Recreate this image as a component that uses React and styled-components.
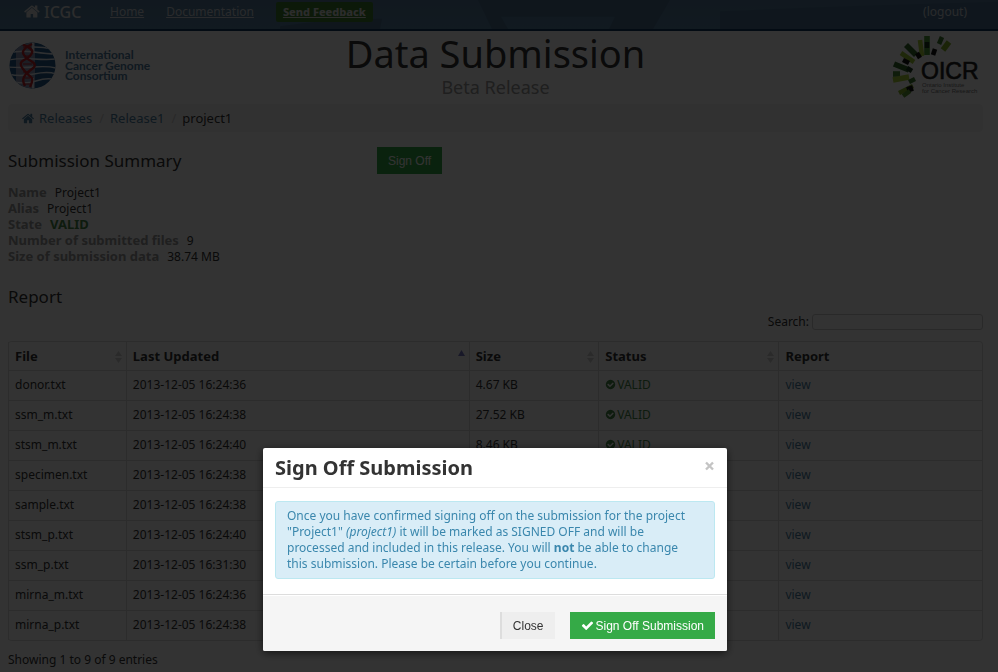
import React from "react";
import styled, { createGlobalStyle } from "styled-components";

const Global = createGlobalStyle`
  * { box-sizing: border-box; }
  body {
    margin: 0;
    background: #fff;
    color: #333;
    font: 12px/16px "Noto Sans", "Open Sans", sans-serif;
    overflow: hidden;
  }
`;

const Navbar = styled.nav`
  position: relative;
  display: flex;
  align-items: center;
  height: 31px;
  padding: 0 31px 6px 24px;
  background: linear-gradient(#567a9a, #5580a0);
  border-bottom: 2px solid #123b5e;
  overflow: hidden;
`;
const NavArt = styled.svg`
  position: absolute;
  inset: 0;
  width: 100%;
  height: 100%;
`;
const NavItems = styled.div`
  position: relative;
  display: flex;
  align-items: center;
  flex: 1;
`;
const Brand = styled.a`
  display: flex;
  align-items: center;
  gap: 3px;
  width: 86px;
  color: #ddd;
  font-size: 16px;
  font-weight: 500;
  text-decoration: none;
`;
const NavLink = styled.a`
  color: #ccd3da;
  font-size: 12px;
  margin-right: 22px;
  text-decoration: ${(p) => (p.$plain ? "none" : "underline")};
  &:last-child { margin: 0 0 0 auto; }
`;
const Feedback = styled.a`
  padding: 2px 7px;
  border-radius: 2px;
  background: #3f7f2f;
  color: #ddd;
  font-size: 11px;
  font-weight: 800;
`;
const Icon = styled.svg`
  width: ${(p) => p.$size}px;
  height: ${(p) => p.$size}px;
  fill: currentColor;
  flex: none;
`;

const Page = styled.div`
  padding: 0 15px 0 8px;
`;
const Masthead = styled.header`
  display: grid;
  grid-template-columns: 1fr auto 1fr;
  height: 73px;
  align-items: start;
`;
const TitleBlock = styled.div`
  text-align: center;
`;
const Title = styled.h1`
  margin: 0;
  font-size: 38px;
  line-height: 44px;
  font-weight: 400;
`;
const Subtitle = styled.p`
  margin: 0;
  color: #999;
  font-size: 18px;
  line-height: 24px;
`;
const OicrWrap = styled.a`
  justify-self: end;
`;

const Breadcrumb = styled.ol`
  display: flex;
  align-items: center;
  gap: 6px;
  height: 28px;
  margin: 0;
  padding: 0 14px;
  list-style: none;
  background: #f5f5f5;
  border-radius: 4px;
`;
const Crumb = styled.li`
  display: flex;
  align-items: center;
  font-size: 13px;
  &:not(:last-child)::after {
    content: "/";
    margin-left: 7px;
    color: #ccc;
  }
`;
const Link = styled.a`
  color: #4b7d9f;
  text-decoration: none;
`;
const CrumbLink = styled(Link)`
  display: inline-flex;
  align-items: center;
  gap: 4px;
`;

const SummaryRow = styled.section`
  display: grid;
  grid-template-columns: 369px 1fr;
  align-items: start;
  padding-top: 15px;
`;
const Heading = styled.h2`
  margin: 0;
  font-size: 17px;
  line-height: 28px;
  font-weight: 400;
`;
const Button = styled.button`
  height: 27px;
  padding: 0 11px;
  border: 0;
  background: ${(p) => (p.$primary ? "#35aa47" : "#eee")};
  color: ${(p) => (p.$primary ? "#fff" : "#333")};
  font: 12px/20px "Liberation Sans", sans-serif;
  ${(p) => (p.$primary ? "" : "border-left: 2px solid #ddd;")}
  display: inline-flex;
  align-items: center;
  gap: 2px;
`;
const SignOffCell = styled.div`
  display: flex;
`;
const Facts = styled.dl`
  margin: 10px 0 18px;
`;
const Fact = styled.div`
  display: flex;
  gap: 8px;
`;
const Term = styled.dt`
  color: #999;
  font-size: 13px;
  line-height: 14px;
  font-weight: 700;
`;
const Value = styled.dd`
  margin: 0;
  ${(p) => (p.$valid ? "color: #468847; font-size: 13px; line-height: 14px; font-weight: 700;" : "")}
  min-height: 16px;
`;

const SearchBar = styled.label`
  display: flex;
  justify-content: flex-end;
  align-items: center;
  gap: 3px;
  height: 16px;
  margin: 3px 0 11px;
`;
const SearchInput = styled.input`
  width: 171px;
  height: 16px;
  border: 1px solid #ccc;
  border-radius: 3px;
  background: #fff;
`;

const Table = styled.table`
  width: 100%;
  table-layout: fixed;
  border: 1px solid #ddd;
  border-left: 0;
  border-radius: 4px;
  border-collapse: separate;
  border-spacing: 0;
`;
const Th = styled.th`
  width: ${(p) => p.$width};
  height: 28px;
  padding: 0 6px;
  border-left: 1px solid #ddd;
  font-size: 13px;
  text-align: left;
`;
const ThInner = styled.div`
  display: flex;
  align-items: center;
  justify-content: space-between;
`;
const Td = styled.td`
  height: 30px;
  padding: 0 6px 2px;
  border-left: 1px solid #ddd;
  border-top: 1px solid #ddd;
`;
const Status = styled.span`
  display: flex;
  align-items: center;
  gap: 1px;
  color: #468847;
`;
const SortIcon = styled.svg`
  width: 7px;
  height: 13px;
  margin-right: -2px;
`;
const Info = styled.p`
  margin: 11px 0 0;
`;

const Backdrop = styled.div`
  position: fixed;
  inset: 0;
  display: flex;
  justify-content: center;
  align-items: flex-start;
  padding: 448px 8px 0 0;
  background: rgba(0, 0, 0, 0.8);
`;
const Dialog = styled.section`
  width: 464px;
  background: #fff;
  border-radius: 2px;
  box-shadow: 0 2px 8px rgba(0, 0, 0, 0.6);
  overflow: hidden;
`;
const DialogHeader = styled.header`
  display: flex;
  justify-content: space-between;
  align-items: center;
  height: 40px;
  padding: 0 12px;
  border-bottom: 1px solid #eee;
`;
const DialogTitle = styled.h3`
  margin: 0;
  font-size: 20px;
  line-height: 24px;
  font-weight: 700;
`;
const CloseButton = styled.button`
  display: flex;
  padding: 0;
  margin-bottom: 4px;
  border: 0;
  background: none;
  color: #c4c4c4;
`;
const DialogBody = styled.div`
  padding: 13px 12px 15px;
`;
const Alert = styled.p`
  margin: 0;
  padding: 6px 24px 6px 11px;
  border: 1px solid #bce8f1;
  border-radius: 3px;
  background: #d9edf7;
  color: #3a87ad;
`;
const DialogFooter = styled.footer`
  display: flex;
  justify-content: flex-end;
  gap: 15px;
  padding: 17px 12px 12px;
  border-top: 1px solid #ddd;
  background: #f5f5f5;
  box-shadow: inset 0 1px 0 #fff;
`;

const HOME =
  "M1408 992v480q0 26-19 45t-45 19h-384v-384h-256v384h-384q-26 0-45-19t-19-45v-480q0-1 .5-3t.5-3l575-474 575 474q1 2 1 6zm223-69l-62 74q-8 9-21 11h-3q-13 0-21-7l-692-577-692 577q-12 8-24 7-13-2-21-11l-62-74q-8-10-7-23.5t11-21.5l719-599q32-26 76-26t76 26l244 204v-195q0-14 9-23t23-9h192q14 0 23 9t9 23v408l219 182q10 8 11 21.5t-7 23.5z";
const CHECK =
  "M1671 566q0 40-28 68l-724 724-136 136q-28 28-68 28t-68-28l-136-136-362-362q-28-28-28-68t28-68l136-136q28-28 68-28t68 28l294 295 656-657q28-28 68-28t68 28l136 136q28 28 28 68z";
const CHECK_CIRCLE =
  "M1412 734q0-28-18-46l-91-90q-19-19-45-19t-45 19l-408 407-226-226q-19-19-45-19t-45 19l-91 90q-18 18-18 46 0 27 18 45l362 362q19 19 45 19 27 0 46-19l543-543q18-18 18-45zm252 162q0 209-103 385.5t-279.5 279.5-385.5 103-385.5-103-279.5-279.5-103-385.5 103-385.5 279.5-279.5 385.5-103 385.5 103 279.5 279.5 103 385.5z";

const Glyph = ({ d, size }) => (
  <Icon $size={size} viewBox="0 0 1792 1792" aria-hidden="true">
    <path d={d} />
  </Icon>
);

const IcgcLogo = () => (
  <svg width="150" height="58" viewBox="0 0 150 58" role="img" aria-label="International Cancer Genome Consortium">
    <defs>
      <clipPath id="globe">
        <circle cx="24.5" cy="34.5" r="23" />
      </clipPath>
    </defs>
    <g clipPath="url(#globe)">
      <rect x="1" y="11" width="47" height="47" fill="#235a8c" />
      <rect x="8" y="11" width="19" height="47" fill="#8c96b4" />
      <g fill="none" stroke="#e8eef5" strokeWidth="1.4">
        <path d="M0 22q12-3 26-1t22 2M0 29q12-2 26-1t22 0M0 36q12 1 26 0t22 1M0 43q12 3 26 0t22 0M2 50q14 4 26 0t20-1M26 16q10 0 18 2" />
      </g>
      <path d="M25 9v13M25 47v12" stroke="#fff" strokeWidth="1.6" />
      <g fill="none" stroke="#c02329" strokeWidth="2.4">
        <path d="M14 13q12 5 10 9t-8 7-1 9 8 8-1 10" />
        <path d="M24 13q-10 5-9 9t8 8 1 8-8 8 1 9" />
      </g>
      <path d="M15 16h8M17 25h6M15 33h9M15 41h7M17 47h5M16 53h6" stroke="#c02329" strokeWidth="1" />
    </g>
    <g fill="#4f7c9f" fontFamily="Lato, sans-serif" fontSize="12" fontWeight="700">
      <text x="57" y="28">International</text>
      <text x="57" y="39">Cancer Genome</text>
      <text x="57" y="49">Consortium</text>
    </g>
  </svg>
);

const BURST = [
  [54, 19, 60, 11, 5, "#86b52b"], [50, 13, 53, 6, 4, "#3f7a30"],
  [44, 24, 46, 18, 4, "#111"], [38, 24, 38, 5, 5, "#4e9a3a"],
  [38, 17, 38, 11, 4, "#18351c"], [33, 25, 31, 9, 4, "#a9cf38"],
  [27, 24, 17, 14, 5, "#33682b"], [31, 27, 28, 22, 4, "#111"],
  [25, 31, 12, 22, 4, "#9cc534"], [20, 32, 14, 29, 4, "#111"],
  [20, 39, 5, 33, 5, "#33682b"], [23, 40, 18, 37, 4, "#1c3a20"],
  [11, 43, 4, 43, 5, "#4e8c3a"], [20, 46, 4, 49, 5, "#a9cf38"],
  [26, 48, 20, 51, 4, "#3f7a30"], [24, 55, 10, 62, 4, "#86b52b"],
  [24, 57, 18, 59, 5, "#111"], [21, 60, 14, 65, 4, "#5b9a35"],
];

const OicrLogo = () => (
  <svg width="94" height="68" viewBox="0 0 94 68" role="img" aria-label="OICR">
    {BURST.map(([x1, y1, x2, y2, w, c]) => (
      <line key={`${x1}-${y1}-${x2}`} x1={x1} y1={y1} x2={x2} y2={y2} stroke={c} strokeWidth={w + 0.6} />
    ))}
    <g fontFamily="Liberation Sans, sans-serif">
      <text x="32" y="48" fontSize="23" fill="#222" stroke="#222" strokeWidth="0.6">OICR</text>
      <g fontSize="6" fill="#777">
        <text x="33" y="56">Ontario Institute</text>
        <text x="33" y="62">for Cancer Research</text>
      </g>
    </g>
  </svg>
);

const Sort = ({ active }) => (
  <SortIcon viewBox="0 0 7 13" aria-hidden="true">
    {active ? (
      <path d="M0 6l3.500-6 3.500 6z" fill="#7a7ac8" />
    ) : (
      <path d="M0 6l3.500-5 3.500 5zM0 8h7l-3.500 5z" fill="#d0d0d0" />
    )}
  </SortIcon>
);

const COLUMNS = [
  ["File", "12.1%", true],
  ["Last Updated", "35.2%", true],
  ["Size", "13.3%", true],
  ["Status", "18.5%", true],
  ["Report", "20.9%", false],
];
const FILES = [
  ["donor.txt", "16:24:36", "4.67 KB"],
  ["ssm_m.txt", "16:24:38", "27.52 KB"],
  ["stsm_m.txt", "16:24:40", "8.46 KB"],
  ["specimen.txt", "16:24:38", "1.38 KB"],
  ["sample.txt", "16:24:38", "1.21 KB"],
  ["stsm_p.txt", "16:24:40", "3.12 MB"],
  ["ssm_p.txt", "16:31:30", "35.5 MB"],
  ["mirna_m.txt", "16:24:36", "2.17 KB"],
  ["mirna_p.txt", "16:24:38", "9.82 KB"],
];
const FACTS = [
  ["Name", "Project1"],
  ["Alias", "Project1"],
  ["State", "VALID"],
  ["Number of submitted files", "9"],
  ["Size of submission data", "38.74 MB"],
];

export default function App() {
  return (
    <>
      <Global />
      <Navbar>
        <NavArt viewBox="0 0 998 31" preserveAspectRatio="none" aria-hidden="true">
          <path d="M280 28q50-8 102-8l-2 11H280zM478 0h192l-17 31h-44l6-13H501l7 13h-16z" fill="#4a6f8e" />
          <path d="M720 12q130-6 278-10v29H720z" fill="#4c7191" />
        </NavArt>
        <NavItems>
          <Brand href="#"><Glyph d={HOME} size={17} />ICGC</Brand>
          <NavLink href="#">Home</NavLink>
          <NavLink href="#">Documentation</NavLink>
          <Feedback href="#">Send Feedback</Feedback>
          <NavLink href="#" $plain>(logout)</NavLink>
        </NavItems>
      </Navbar>
      <Page>
        <Masthead>
          <IcgcLogo />
          <TitleBlock>
            <Title>Data Submission</Title>
            <Subtitle>Beta Release</Subtitle>
          </TitleBlock>
          <OicrWrap href="#"><OicrLogo /></OicrWrap>
        </Masthead>
        <Breadcrumb>
          <Crumb><CrumbLink href="#"><Glyph d={HOME} size={13} />Releases</CrumbLink></Crumb>
          <Crumb><CrumbLink href="#">Release1</CrumbLink></Crumb>
          <Crumb>project1</Crumb>
        </Breadcrumb>
        <SummaryRow>
          <div>
            <Heading>Submission Summary</Heading>
            <Facts>
              {FACTS.map(([k, v]) => (
                <Fact key={k}>
                  <Term>{k}</Term>
                  <Value $valid={v === "VALID"}>{v}</Value>
                </Fact>
              ))}
            </Facts>
          </div>
          <SignOffCell><Button $primary>Sign Off</Button></SignOffCell>
        </SummaryRow>
        <Heading>Report</Heading>
        <SearchBar>
          Search:
          <SearchInput type="text" />
        </SearchBar>
        <Table>
          <thead>
            <tr>
              {COLUMNS.map(([name, width, sortable]) => (
                <Th key={name} $width={width}>
                  <ThInner>
                    {name}
                    {sortable && <Sort active={name === "Last Updated"} />}
                  </ThInner>
                </Th>
              ))}
            </tr>
          </thead>
          <tbody>
            {FILES.map(([file, time, size]) => (
              <tr key={file}>
                <Td>{file}</Td>
                <Td>2013-12-05 {time}</Td>
                <Td>{size}</Td>
                <Td><Status><Glyph d={CHECK_CIRCLE} size={11} />VALID</Status></Td>
                <Td><Link href="#">view</Link></Td>
              </tr>
            ))}
          </tbody>
        </Table>
        <Info>Showing 1 to 9 of 9 entries</Info>
      </Page>
      <Backdrop>
        <Dialog role="dialog" aria-modal="true" aria-labelledby="dialog-title">
          <DialogHeader>
            <DialogTitle id="dialog-title">Sign Off Submission</DialogTitle>
            <CloseButton aria-label="Close dialog">
              <svg width="11" height="10" viewBox="0 0 11 10">
                <path d="M2 1.500l7 7M9 1.500l-7 7" stroke="currentColor" strokeWidth="2.400" />
              </svg>
            </CloseButton>
          </DialogHeader>
          <DialogBody>
            <Alert>
              Once you have confirmed signing off on the submission for the project
              "Project1" <em>(project1)</em> it will be marked as SIGNED OFF and will be
              processed and included in this release. You will <strong>not</strong> be able to change
              this submission. Please be certain before you continue.
            </Alert>
          </DialogBody>
          <DialogFooter>
            <Button>Close</Button>
            <Button $primary><Glyph d={CHECK} size={13} />Sign Off Submission</Button>
          </DialogFooter>
        </Dialog>
      </Backdrop>
    </>
  );
}
